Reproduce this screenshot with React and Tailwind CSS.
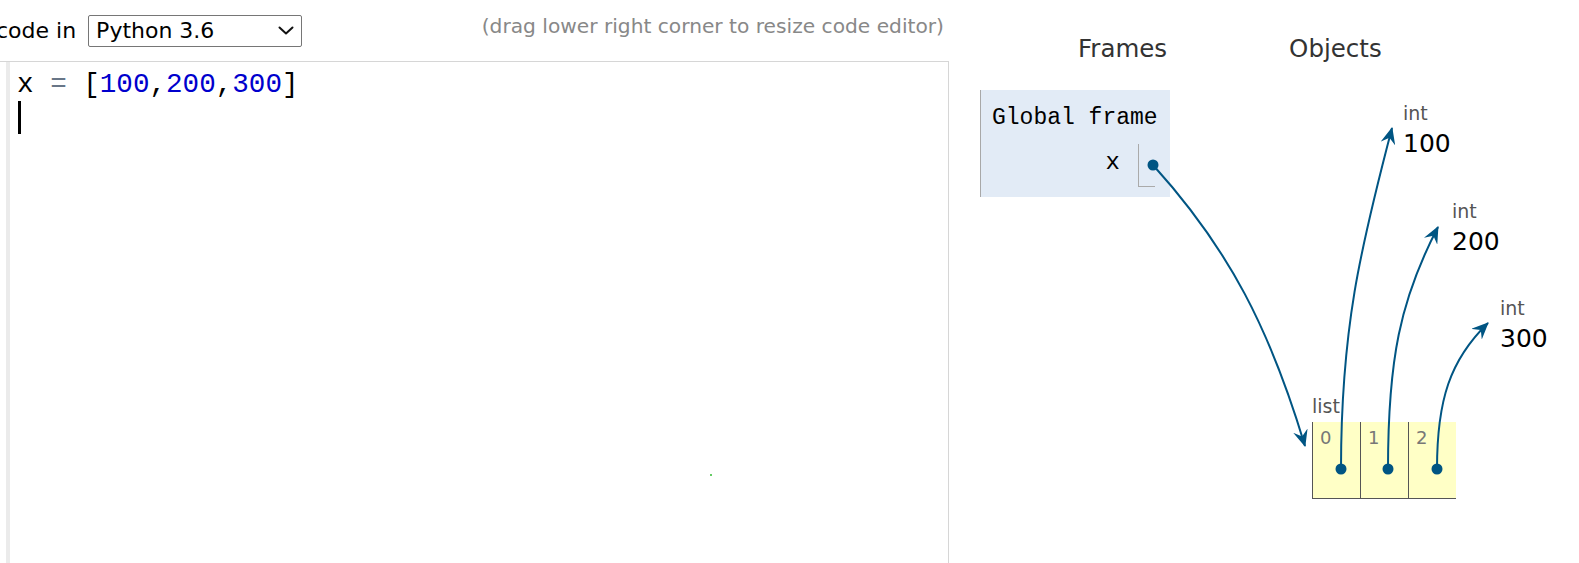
const ARROW = "#005583";

function Chevron() {
  return (
    <svg width="16" height="9" viewBox="0 0 16 9" fill="none">
      <path d="M1.5 1.5 L8 7.5 L14.5 1.5" stroke="#111" strokeWidth="2" strokeLinecap="round" strokeLinejoin="round" />
    </svg>
  );
}

function HeapInt({ value, className }) {
  return (
    <div className={"absolute " + className}>
      <div className="text-[19px] leading-[22px] text-[#555]">int</div>
      <div className="mt-[3px] text-[25px] leading-[33px] text-black">{value}</div>
    </div>
  );
}

function ListCell({ index }) {
  return (
    <div className="w-[48px] h-[77px] border-l border-b border-[#555] bg-[#ffffc6] pl-[7px] pt-[5px]">
      <span className="text-[18px] leading-[20px] text-[#777]">{index}</span>
    </div>
  );
}

// pointer arrows, drawn over the whole page in page coordinates
function Arrows() {
  const paths = [
    "M1153,165 C1230,250 1270,330 1305,446",
    "M1341,469 C1341,330 1360,250 1392,128",
    "M1388,469 C1388,360 1400,300 1438,227",
    "M1437,469 C1437,400 1450,360 1488,323",
  ];
  const dots = [
    [1153, 165],
    [1341, 469],
    [1388, 469],
    [1437, 469],
  ];
  return (
    <svg className="absolute left-0 top-0 pointer-events-none" width="1579" height="563">
      <defs>
        <marker
          id="head"
          viewBox="0 0 17 15"
          refX="16"
          refY="7.5"
          markerWidth="17"
          markerHeight="15"
          markerUnits="userSpaceOnUse"
          orient="auto"
        >
          <path d="M0,0 L17,7.5 L0,15 L6,7.5 z" fill={ARROW} />
        </marker>
      </defs>
      {paths.map((d) => (
        <path key={d} d={d} fill="none" stroke={ARROW} strokeWidth="2" markerEnd="url(#head)" />
      ))}
      {dots.map(([cx, cy]) => (
        <circle key={cx} cx={cx} cy={cy} r="5.5" fill={ARROW} />
      ))}
    </svg>
  );
}

export default function App() {
  return (
    <div className="relative w-[1579px] h-[563px] overflow-hidden bg-white flex font-['DejaVu_Sans',Verdana,sans-serif]">
      {/* Code editor column */}
      <div className="w-[960px] shrink-0 flex flex-col">
        <div className="h-[61px] w-[949px] flex items-center">
          <span className="ml-[-4px] text-[22px] leading-[32px] text-black whitespace-nowrap">code in</span>
          <div className="relative ml-[12px]">
            <select
              defaultValue="3.6"
              className="appearance-none w-[214px] h-[32px] border border-[#767676] rounded-[2px] bg-white pl-[7px] text-[22px] leading-[28px] text-black font-['DejaVu_Sans',sans-serif] outline-none"
            >
              <option value="3.6">Python 3.6</option>
            </select>
            <span className="absolute right-[8px] top-[11px] pointer-events-none">
              <Chevron />
            </span>
          </div>
          <span className="ml-auto self-start mt-[14px] pr-[5px] text-[20.2px] leading-[24px] text-[#888] whitespace-nowrap">
            (drag lower right corner to resize code editor)
          </span>
        </div>
        <div className="relative flex-1 w-[949px] border-t border-r border-[#d6d6d6] flex">
          <div className="w-[6px]" />
          <div className="w-[4px] bg-[#ebebeb]" />
          <div className="pl-[7px] pt-[6px] font-['Liberation_Mono',monospace] text-[27.6px] leading-[33px]">
            <div className="whitespace-pre text-black">
              x <span className="text-[#687687]">=</span> [<span className="text-[#0000cd]">100</span>,<span className="text-[#0000cd]">200</span>,<span className="text-[#0000cd]">300</span>]
            </div>
            <div className="h-[33px] flex">
              <span className="ml-[1px] w-[3px] h-[33px] bg-black" />
            </div>
          </div>
          <span className="absolute left-[710px] top-[412px] w-[2px] h-[2px] bg-[#6c6]" />
        </div>
      </div>

      {/* Visualization column */}
      <div className="relative flex-1">
        <div className="mt-[34px] h-[30px] flex text-[24.5px] leading-[30px] text-[#333]">
          <span className="ml-[118px]">Frames</span>
          <span className="ml-[122px]">Objects</span>
        </div>
        <div className="mt-[26px] ml-[20px] w-[190px] h-[107px] bg-[#e2ebf6] border-l border-[#a8a8a8] pl-[11px] pt-[14px] font-['Liberation_Mono',monospace]">
          <div className="text-[23px] leading-[28px] text-black whitespace-nowrap">Global frame</div>
          <div className="mt-[12px] flex justify-end">
            <span className="mt-[5px] text-[24px] leading-[27px] text-black mr-[18px]">x</span>
            <div className="w-[17px] h-[43px] border-l border-b border-[#aaa] mr-[15px]" />
          </div>
        </div>

        <HeapInt value="100" className="left-[443px] top-[102px]" />
        <HeapInt value="200" className="left-[492px] top-[200px]" />
        <HeapInt value="300" className="left-[540px] top-[297px]" />

        <div className="absolute left-[352px] top-[395px]">
          <div className="text-[19px] leading-[22px] text-[#555]">list</div>
          <div className="mt-[5px] flex">
            <ListCell index="0" />
            <ListCell index="1" />
            <ListCell index="2" />
          </div>
        </div>
      </div>

      <Arrows />
    </div>
  );
}
